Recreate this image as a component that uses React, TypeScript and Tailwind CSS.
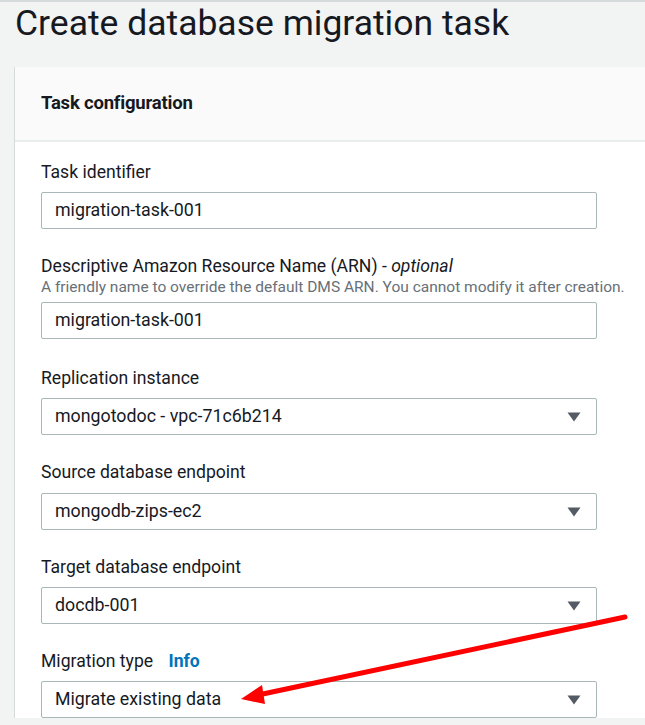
import React from "react";

const font = { fontFamily: "Roboto, 'Noto Sans', sans-serif" };

function Caret() {
  return (
    <svg width="14" height="10" viewBox="0 0 14 10" className="shrink-0">
      <path d="M0.5 0.5 H13.5 L7 9.5 Z" fill="#545b64" />
    </svg>
  );
}

function Label({ children }: { children: React.ReactNode }) {
  return <div className="text-[17.6px] leading-[22px] text-[#16191f]">{children}</div>;
}

function TextInput({ value }: { value: string }) {
  return (
    <div className="h-[37px] w-[556px] rounded-[2px] border border-[#aab7b8] bg-white px-[13px] flex items-center text-[17.8px] text-[#16191f]">
      {value}
    </div>
  );
}

function Select({ value }: { value: string }) {
  return (
    <div className="h-[37px] w-[556px] rounded-[2px] border border-[#aab7b8] bg-white pl-[13px] pr-[15px] flex items-center justify-between text-[17.8px] text-[#16191f]">
      <span>{value}</span>
      <Caret />
    </div>
  );
}

export default function App() {
  return (
    <div className="relative h-[725px] w-[645px] overflow-hidden bg-[#f2f3f3] border-t-2 border-[#d5dbdb]" style={font}>
      <h1 className="pl-[15px] pt-[1px] text-[35.5px] leading-[40px] font-normal text-[#16191f]">
        Create database migration task
      </h1>

      <div className="ml-[14px] mt-[24px] border-l border-[#d5dbdb] bg-white">
        <div className="h-[75px] bg-[#fafafa] border-b-2 border-[#eaeded] flex items-center pl-[26px]">
          <h2 className="text-[18.5px] font-bold text-[#16191f] tracking-[-0.2px]">Task configuration</h2>
        </div>

        <div className="pl-[26px] pt-[19px] flex flex-col">
          <Label>Task identifier</Label>
          <div className="mt-[9px]">
            <TextInput value="migration-task-001" />
          </div>

          <div className="mt-[26px]">
            <Label>
              Descriptive Amazon Resource Name (ARN) - <i>optional</i>
            </Label>
          </div>
          <div className="mt-[1px] text-[15.5px] leading-[19px] text-[#687078]">
            A friendly name to override the default DMS ARN. You cannot modify it after creation.
          </div>
          <div className="mt-[5px]">
            <TextInput value="migration-task-001" />
          </div>

          <div className="mt-[28px]">
            <Label>Replication instance</Label>
          </div>
          <div className="mt-[9px]">
            <Select value="mongotodoc - vpc-71c6b214" />
          </div>

          <div className="mt-[26px]">
            <Label>Source database endpoint</Label>
          </div>
          <div className="mt-[10px]">
            <Select value="mongodb-zips-ec2" />
          </div>

          <div className="mt-[26px]">
            <Label>Target database endpoint</Label>
          </div>
          <div className="mt-[9px]">
            <Select value="docdb-001" />
          </div>

          <div className="mt-[26px]">
            <Label>
              Migration type <span className="ml-[11px] font-bold text-[#0073bb]">Info</span>
            </Label>
          </div>
          <div className="mt-[9px]">
            <Select value="Migrate existing data" />
          </div>
        </div>
      </div>

      {/* annotation arrow */}
      <svg className="pointer-events-none absolute left-0 top-0" width="645" height="725" viewBox="0 0 645 725">
        <line x1="625" y1="615" x2="258" y2="693" stroke="#ff0000" strokeWidth="5" strokeLinecap="round" />
        <path d="M241 697 L262 683 L265 702 Z" fill="#ff0000" />
      </svg>
    </div>
  );
}
